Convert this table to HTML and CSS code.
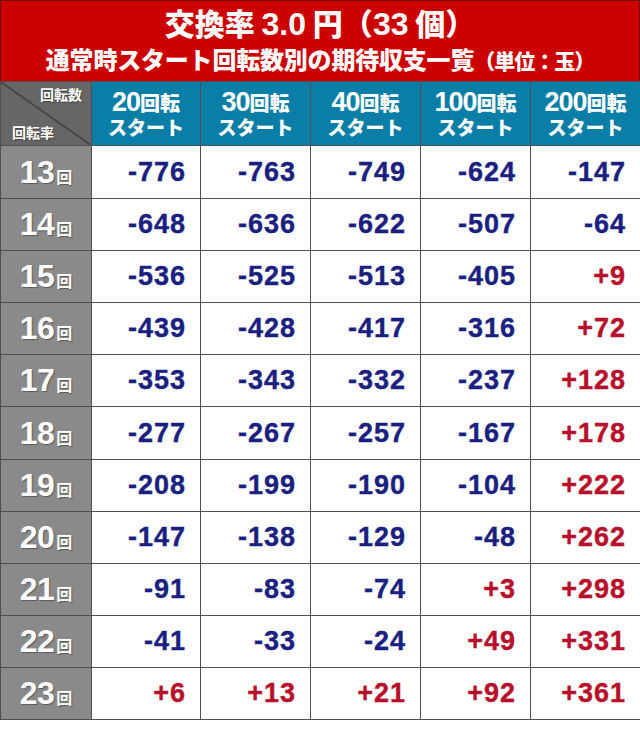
FILE: index.html
```html
<!DOCTYPE html>
<html lang="ja">
<head>
<meta charset="utf-8">
<link rel="stylesheet" href="styles.css">
</head>
<body>
<div class="frame">
  <div class="title">
    <div class="t1">交換率 <span class="tnum">3.0</span> 円（<span class="tnum">33</span> 個）</div>
    <div class="t2">通常時スタート回転数別の期待収支一覧<span class="unit">（単位：玉）</span></div>
  </div>
  <table class="grid">
    <colgroup>
      <col class="c0"><col class="c1"><col class="c2"><col class="c2"><col class="c2"><col class="c2">
    </colgroup>
    <thead>
      <tr class="hrow">
        <th class="corner"><span class="ctop">回転数</span><span class="cbot">回転率</span></th>
        <th class="ch"><div class="l1"><span class="n">20</span>回転</div><div class="l2">スタート</div></th>
        <th class="ch"><div class="l1"><span class="n">30</span>回転</div><div class="l2">スタート</div></th>
        <th class="ch"><div class="l1"><span class="n">40</span>回転</div><div class="l2">スタート</div></th>
        <th class="ch"><div class="l1"><span class="n">100</span>回転</div><div class="l2">スタート</div></th>
        <th class="ch"><div class="l1"><span class="n">200</span>回転</div><div class="l2">スタート</div></th>
      </tr>
    </thead>
    <tbody>
      <tr><th class="rh"><span class="n">13</span>回</th><td class="m">-776</td><td class="m">-763</td><td class="m">-749</td><td class="m">-624</td><td class="m">-147</td></tr>
      <tr><th class="rh"><span class="n">14</span>回</th><td class="m">-648</td><td class="m">-636</td><td class="m">-622</td><td class="m">-507</td><td class="m">-64</td></tr>
      <tr><th class="rh"><span class="n">15</span>回</th><td class="m">-536</td><td class="m">-525</td><td class="m">-513</td><td class="m">-405</td><td class="p">+9</td></tr>
      <tr><th class="rh"><span class="n">16</span>回</th><td class="m">-439</td><td class="m">-428</td><td class="m">-417</td><td class="m">-316</td><td class="p">+72</td></tr>
      <tr><th class="rh"><span class="n">17</span>回</th><td class="m">-353</td><td class="m">-343</td><td class="m">-332</td><td class="m">-237</td><td class="p">+128</td></tr>
      <tr><th class="rh"><span class="n">18</span>回</th><td class="m">-277</td><td class="m">-267</td><td class="m">-257</td><td class="m">-167</td><td class="p">+178</td></tr>
      <tr><th class="rh"><span class="n">19</span>回</th><td class="m">-208</td><td class="m">-199</td><td class="m">-190</td><td class="m">-104</td><td class="p">+222</td></tr>
      <tr><th class="rh"><span class="n">20</span>回</th><td class="m">-147</td><td class="m">-138</td><td class="m">-129</td><td class="m">-48</td><td class="p">+262</td></tr>
      <tr><th class="rh"><span class="n">21</span>回</th><td class="m">-91</td><td class="m">-83</td><td class="m">-74</td><td class="p">+3</td><td class="p">+298</td></tr>
      <tr><th class="rh"><span class="n">22</span>回</th><td class="m">-41</td><td class="m">-33</td><td class="m">-24</td><td class="p">+49</td><td class="p">+331</td></tr>
      <tr><th class="rh"><span class="n">23</span>回</th><td class="p">+6</td><td class="p">+13</td><td class="p">+21</td><td class="p">+92</td><td class="p">+361</td></tr>
    </tbody>
  </table>
</div>
</body>
</html>
```
FILE: styles.css
```css
html, body {
  margin: 0;
  padding: 0;
  background: #ffffff;
}
body {
  width: 640px;
  font-family: "Liberation Sans", "Noto Sans CJK JP", sans-serif;
}
.frame {
  width: 640px;
}
.title {
  box-sizing: border-box;
  height: 81px;
  background: #cc0000;
  border: 1px solid #6e1010;
  border-bottom: none;
  color: #ffffff;
  font-family: "Noto Sans CJK JP", sans-serif;
  font-weight: 900;
  text-align: center;
  padding-top: 2px;
}
.t1 {
  font-size: 30px;
  line-height: 38px;
}
.tnum {
  font-family: "Liberation Sans", sans-serif;
  font-weight: 700;
  font-size: 32px;
}
.t2 {
  font-size: 24px;
  line-height: 32px;
  letter-spacing: -0.2px;
}
.unit {
  font-size: 21px;
  letter-spacing: -1px;
}
.grid {
  border-collapse: collapse;
  table-layout: fixed;
  width: 640px;
}
.c0 { width: 91px; }
.c1 { width: 109px; }
.c2 { width: 110px; }
.grid th, .grid td {
  border: 1px solid #505050;
  padding: 0;
}
.hrow { height: 64px; }
.corner {
  position: relative;
  background-color: #666666;
  background-image: linear-gradient(to top right, transparent calc(50% - 0.7px), #111111 50%, transparent calc(50% + 0.7px));
  border-right: 2px solid #333333;
  color: #ffffff;
  font-family: "Noto Sans CJK JP", sans-serif;
  font-weight: 700;
  font-size: 14px;
  text-shadow: 1px 1px 1px rgba(0,0,0,0.35);
}
.ctop {
  position: absolute;
  right: 9px;
  top: 2px;
}
.cbot {
  position: absolute;
  left: 11px;
  bottom: 3px;
}
.ch {
  background: #0a7ea6;
  color: #ffffff;
  font-family: "Noto Sans CJK JP", sans-serif;
  font-weight: 900;
  text-align: center;
  vertical-align: middle;
  border-color: #1b4f66;
}
.ch .l1 {
  font-size: 20px;
  line-height: 26px;
  height: 27px;
}
.ch .n {
  font-family: "Liberation Sans", sans-serif;
  font-weight: 700;
  font-size: 27px;
  line-height: 26px;
  letter-spacing: -1px;
}
.ch .l2 {
  font-size: 19px;
  line-height: 22px;
}
tbody tr { height: 52px; }
tbody tr:nth-child(1), tbody tr:nth-child(6) { height: 53px; }
.rh {
  background: #8a8a8a;
  color: #ffffff;
  font-family: "Noto Sans CJK JP", sans-serif;
  font-weight: 700;
  font-size: 16px;
  text-align: center;
  border-right: 2px solid #333333;
  text-shadow: 1px 1px 1px rgba(0,0,0,0.35);
  padding-left: 4px;
}
.rh .n {
  font-family: "Liberation Sans", sans-serif;
  font-size: 32px;
  letter-spacing: -0.5px;
  margin-right: 2px;
}
.grid td {
  font-family: "Liberation Sans", sans-serif;
  font-weight: 700;
  font-size: 27px;
  letter-spacing: 1px;
  text-align: right;
  padding-right: 14px;
  vertical-align: middle;
  -webkit-text-stroke: 0.4px currentColor;
}
.m { color: #1a1f80; }
.p { color: #b8102b; }
```
